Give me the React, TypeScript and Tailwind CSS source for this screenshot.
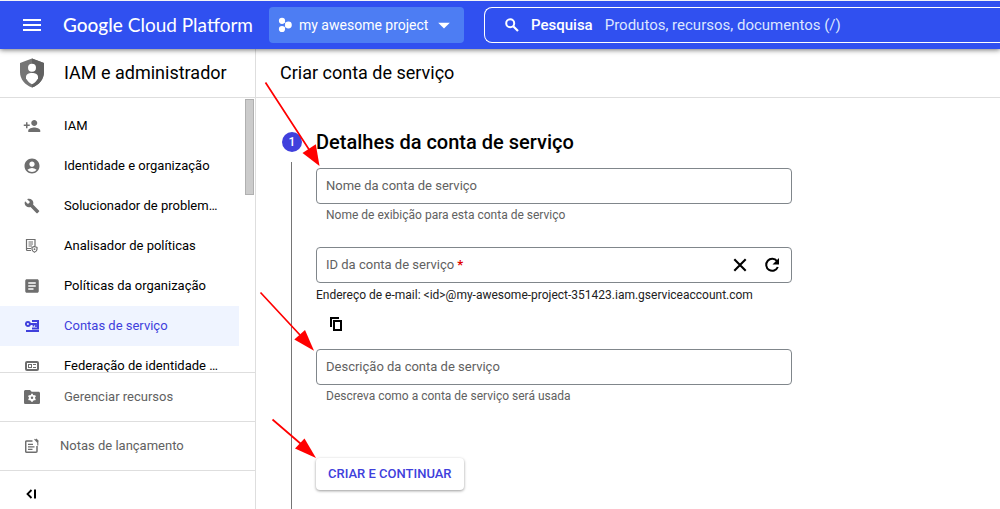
import type { ReactNode } from "react";
import {
  MdAccountCircle,
  MdArrowDropDown,
  MdArticle,
  MdBuild,
  MdMenu,
  MdPersonAdd,
} from "react-icons/md";

function SearchIcon() {
  return (
    <svg width="14" height="14" viewBox="0 0 14 14" fill="none" stroke="currentColor" className="shrink-0" aria-hidden="true">
      <circle cx="5.200" cy="5.200" r="4" strokeWidth="2" />
      <path d="M8.200 8.200l4.800 4.800" strokeWidth="2.200" />
    </svg>
  );
}

function ClearIcon() {
  return (
    <svg width="20" height="20" viewBox="0 0 20 20" fill="none" stroke="currentColor" aria-hidden="true">
      <path d="M4.300 4.300l11.400 11.400M15.700 4.300L4.300 15.700" strokeWidth="2.100" />
    </svg>
  );
}

function RegenerateIcon() {
  return (
    <svg width="20" height="20" viewBox="0 0 20 20" fill="none" stroke="currentColor" aria-hidden="true">
      <path d="M15 6.200A6 6 0 1 0 15.800 12" strokeWidth="2" />
      <path d="M17 3v6.500h-6.500z" fill="currentColor" stroke="none" />
    </svg>
  );
}

function ProjectIcon() {
  return (
    <svg width="14" height="16" viewBox="0 0 14 16" fill="currentColor" aria-hidden="true">
      <circle cx="4" cy="3.800" r="3.100" />
      <circle cx="4" cy="12" r="3.100" />
      <circle cx="10.400" cy="8" r="3.400" />
      <path d="M4 3.800l6.200 4.200L4 12" fill="none" stroke="currentColor" strokeWidth="0.800" />
    </svg>
  );
}

function ShieldIcon() {
  return (
    <svg width="24" height="30" viewBox="0 0 24 30" aria-hidden="true">
      <path d="M12 0.500L0 5v9c0 7.200 5 13 12 15.500 7-2.500 12-8.300 12-15.500V5z" fill="#757575" />
      <path d="M12 0.500L24 5v9c0 7.200-5 13-12 15.500z" fill="#616161" />
      <circle cx="12" cy="9.800" r="4" fill="#fff" />
      <path d="M6 20.500v-1.500c0-2.700 2.600-4 6-4s6 1.300 6 4v1.500c-1.500 2.700-3.500 4.500-6 5.700-2.500-1.200-4.500-3-6-5.700z" fill="#fff" />
    </svg>
  );
}

function PolicyAnalyzerIcon() {
  return (
    <svg width="16" height="16" viewBox="0 0 16 16" fill="none" stroke="currentColor" aria-hidden="true">
      <path d="M7 12.500H3.500a1 1 0 0 1-1-1V1.500h8.500V8" strokeWidth="1.200" />
      <path d="M4.500 4h4.500M4.500 6h4.500M4.500 8h3.500M2 10.500h5" strokeWidth="1.100" />
      <path d="M10.500 8.500l2.500 1v1.800c0 1.400-1 2.400-2.500 3-1.500-.600-2.500-1.600-2.500-3V9.500z" strokeWidth="1.200" />
      <circle cx="10.500" cy="11.200" r="0.900" fill="currentColor" stroke="none" />
    </svg>
  );
}

function ServiceAccountIcon() {
  return (
    <svg width="14" height="12" viewBox="0 0 14 12" fill="none" stroke="currentColor" aria-hidden="true">
      <circle cx="2.900" cy="4" r="2" strokeWidth="1.900" />
      <path d="M5 4h6v3M8.500 4v2.600" strokeWidth="1.800" />
      <path d="M7 1h6v7.500H7" strokeWidth="2" />
      <path d="M1 11h13" strokeWidth="2" />
    </svg>
  );
}

function FederationIcon() {
  return (
    <svg width="14" height="12" viewBox="0 0 14 12" fill="none" stroke="currentColor" aria-hidden="true">
      <rect x="1" y="2" width="12" height="8" rx="1" strokeWidth="2" />
      <rect x="3.500" y="4.500" width="3" height="3" strokeWidth="1" />
      <path d="M8 4.500h3M8 7.500h3" strokeWidth="1" />
    </svg>
  );
}

function FolderSettingsIcon() {
  return (
    <svg width="16" height="14" viewBox="0 0 16 14" aria-hidden="true">
      <path d="M1.500 0H6l1.700 1.700h6.800c.9 0 1.500.7 1.500 1.500v9.200c0 .9-.7 1.600-1.500 1.600h-13C.7 14 0 13.300 0 12.400V1.600C0 .7.7 0 1.500 0z" fill="currentColor" />
      <circle cx="8" cy="7.800" r="2.200" fill="none" stroke="#fff" strokeWidth="1.900" />
      <path d="M8 3.800v1.600M8 10.200v1.600M4.500 5.800l1.400.8M10.100 9l1.400.8M4.500 9.800l1.400-.8M10.100 6.600l1.400-.8" stroke="#fff" strokeWidth="1.800" />
    </svg>
  );
}

function ReleaseNotesIcon() {
  return (
    <svg width="14" height="16" viewBox="0 0 14 16" fill="none" stroke="currentColor" aria-hidden="true">
      <path d="M7.500 3H1.700a1 1 0 0 0-1 1v9.300a1 1 0 0 0 1 1h9.300a1 1 0 0 0 1-1V8" strokeWidth="1.500" />
      <path d="M3 6.300h5M3 8.800h6.500M3 11.300h4.500" strokeWidth="1.300" />
      <path d="M9.500 1.200l3.300 3.300v3M11 1l2.500 2.500" strokeWidth="1.100" />
    </svg>
  );
}

function CollapseIcon() {
  return (
    <svg width="10" height="10" viewBox="0 0 10 10" fill="none" stroke="currentColor" aria-hidden="true">
      <path d="M5.500 1L1.500 5l4 4" strokeWidth="1.800" />
      <path d="M9 0.500v9" strokeWidth="2" />
    </svg>
  );
}

function CopyIcon() {
  return (
    <svg width="12" height="14" viewBox="0 0 12 14" fill="none" stroke="currentColor" aria-hidden="true">
      <path d="M1 10V1H9" strokeWidth="2" />
      <rect x="4" y="4" width="7" height="9" strokeWidth="2" />
    </svg>
  );
}

const navItems: { label: string; icon: ReactNode; active?: boolean }[] = [
  { label: "IAM", icon: <MdPersonAdd size={18} /> },
  { label: "Identidade e organização", icon: <MdAccountCircle size={18} /> },
  { label: "Solucionador de problem…", icon: <MdBuild size={16} /> },
  { label: "Analisador de políticas", icon: <PolicyAnalyzerIcon /> },
  { label: "Políticas da organização", icon: <MdArticle size={18} /> },
  { label: "Contas de serviço", icon: <ServiceAccountIcon />, active: true },
  { label: "Federação de identidade …", icon: <FederationIcon /> },
];

function TopBar() {
  return (
    <header className="z-10 flex h-[49px] shrink-0 items-center border-t border-gray-100 bg-[#3050f0] text-white shadow-[0_1px_5px_rgba(0,0,0,0.55)]">
      <button type="button" aria-label="Menu" className="ml-5 flex shrink-0">
        <MdMenu size={24} />
      </button>
      <a
        href="#"
        className="ml-[19px] w-[194px] shrink-0 font-['Lato',sans-serif] text-[19px] leading-6 whitespace-nowrap"
      >
        <span className="font-medium">Google</span> Cloud Platform
      </a>
      <button
        type="button"
        className="ml-3 flex h-9 w-[195px] shrink-0 items-center rounded bg-[#4d7df3] pl-[9px] text-sm whitespace-nowrap"
      >
        <ProjectIcon />
        <span className="ml-[7px]">my awesome project</span>
        <MdArrowDropDown size={28} className="ml-0.5" />
      </button>
      <label className="ml-5 flex h-9 min-w-0 flex-1 items-center rounded-l-lg border border-r-0 border-white pl-5 text-[15px]">
        <SearchIcon />
        <span className="ml-3 font-medium">Pesquisa</span>
        <input
          type="search"
          placeholder="Produtos, recursos, documentos (/)"
          className="ml-3 min-w-0 flex-1 bg-transparent outline-none placeholder:text-[#dce5ff]"
        />
      </label>
    </header>
  );
}

function Sidebar() {
  return (
    <aside className="flex w-64 shrink-0 flex-col border-r border-[#dedede]">
      <div className="flex h-[49px] shrink-0 items-center border-b border-[#dedede] pl-5">
        <ShieldIcon />
        <h2 className="ml-5 text-lg">IAM e administrador</h2>
      </div>
      <nav className="relative min-h-0 flex-1 overflow-hidden pt-2 pr-4">
        {navItems.map((item) => (
          <a
            key={item.label}
            href="#"
            className={
              item.active
                ? "flex h-10 items-center bg-[#eff4ff] pl-[22px] text-[#4040dc]"
                : "flex h-10 items-center pl-[22px] text-black"
            }
          >
            <span className={item.active ? "flex w-5 justify-center" : "flex w-5 justify-center text-[#6e6e6e]"}>
              {item.icon}
            </span>
            <span className="ml-[22px] text-[13px] whitespace-nowrap">{item.label}</span>
          </a>
        ))}
        <div className="absolute top-px right-px h-24 w-[9px] border border-[#b0b0b0] bg-[#cbcbcb]" />
      </nav>
      <a
        href="#"
        className="flex h-[49px] shrink-0 items-center border-t border-[#dedede] pl-6 text-[13px] text-[#616161]"
      >
        <span className="text-[#6e6e6e]">
          <FolderSettingsIcon />
        </span>
        <span className="ml-6">Gerenciar recursos</span>
      </a>
      <a
        href="#"
        className="flex h-[49px] shrink-0 items-center border-t border-[#dedede] pl-[25px] text-[13px] text-[#616161]"
      >
        <span className="text-[#6e6e6e]">
          <ReleaseNotesIcon />
        </span>
        <span className="ml-[21px]">Notas de lançamento</span>
      </a>
      <div className="flex h-[39px] shrink-0 items-center border-t border-[#dedede] pt-2 pl-[26px]">
        <button type="button" aria-label="Recolher menu">
          <CollapseIcon />
        </button>
      </div>
    </aside>
  );
}

function Field({
  id,
  label,
  required,
  children,
}: {
  id: string;
  label: string;
  required?: boolean;
  children?: ReactNode;
}) {
  return (
    <div className="flex h-9 items-center rounded border border-[#80868b] px-[9px] text-[13px]">
      <label htmlFor={id} className="whitespace-nowrap text-[#616161]">
        {label}
        {required && <span className="font-bold text-[#e00000]"> *</span>}
      </label>
      <input id={id} type="text" required={required} className="h-full min-w-0 flex-1 pl-2 outline-none" />
      {children}
    </div>
  );
}

function ServiceAccountForm() {
  return (
    <form className="flex min-h-0 flex-1 overflow-hidden pl-[26px]">
      <div className="flex w-5 flex-col pt-[34px]">
        <span className="flex size-5 shrink-0 items-center justify-center rounded-full bg-[#4040dc] text-xs font-medium text-white">
          1
        </span>
        <span className="mt-[10px] ml-[9px] w-px flex-1 bg-[#757575]" />
      </div>
      <div className="ml-[14px] max-w-[476px] flex-1 pt-8">
        <h3 className="text-xl leading-6 font-medium">Detalhes da conta de serviço</h3>
        <div className="mt-[14px]">
          <Field id="account-name" label="Nome da conta de serviço" />
          <p className="mt-[3px] ml-[10px] text-xs text-[#616161]">Nome de exibição para esta conta de serviço</p>
        </div>
        <div className="mt-6">
          <Field id="account-id" label="ID da conta de serviço" required>
            <button type="button" aria-label="Limpar" className="flex">
              <ClearIcon />
            </button>
            <button type="button" aria-label="Gerar novamente" className="ml-3 flex">
              <RegenerateIcon />
            </button>
          </Field>
          <p className="mt-1 text-xs text-[#212121]">
            Endereço de e-mail: &lt;id&gt;@my-awesome-project-351423.iam.gserviceaccount.com
          </p>
          <button type="button" aria-label="Copiar endereço de e-mail" className="mt-[14px] ml-[14px] block">
            <CopyIcon />
          </button>
        </div>
        <div className="mt-[18px]">
          <Field id="account-description" label="Descrição da conta de serviço" />
          <p className="mt-[3px] ml-[10px] text-xs text-[#616161]">Descreva como a conta de serviço será usada</p>
        </div>
        <button
          type="submit"
          className="mt-[54px] h-8 rounded px-3 text-[13px] font-medium text-[#4040dc] shadow-[0_1px_3px_rgba(0,0,0,0.4)]"
        >
          CRIAR E CONTINUAR
        </button>
      </div>
    </form>
  );
}

function Arrows() {
  return (
    <svg
      className="pointer-events-none absolute top-0 left-0 z-20"
      width="340"
      height="480"
      viewBox="0 0 340 480"
      fill="#ff0000"
      aria-hidden="true"
    >
      <path d="M265.500 82.500L310 151M260.500 292.500L300 335M272.500 419.500L301 444" stroke="#ff0000" strokeWidth="1.700" />
      <path d="M319.500 166L302.500 153L315.800 144.300z" />
      <path d="M314 350.800L294.300 339.500L305 330z" />
      <path d="M316 458L295 448.500L304.500 438.500z" />
    </svg>
  );
}

export default function App() {
  return (
    <div className="relative flex h-screen flex-col overflow-hidden bg-white font-['Roboto',sans-serif] text-black">
      <TopBar />
      <div className="flex min-h-0 flex-1">
        <Sidebar />
        <main className="flex min-w-0 flex-1 flex-col">
          <div className="flex h-[49px] shrink-0 items-center border-b border-[#dedede] pl-6">
            <h1 className="text-lg">Criar conta de serviço</h1>
          </div>
          <ServiceAccountForm />
        </main>
      </div>
      <Arrows />
    </div>
  );
}
